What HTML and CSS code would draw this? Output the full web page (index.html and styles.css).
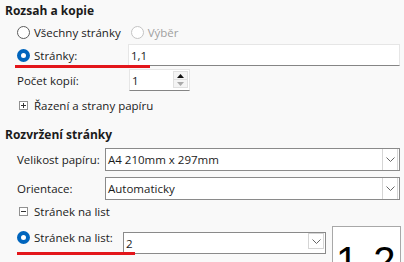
FILE: index.html
```html
<!DOCTYPE html>
<html>
<head>
    <title>Tisk</title>
    <link rel="stylesheet" href="styles.css">
</head>
<body>
    <div id="panel">
        <div class="section-title">Rozsah a kopie</div>
        <div class="row row-choice">
            <label class="opt"><span class="radio"></span>Všechny stránky</label>
            <label class="opt disabled"><span class="radio"></span>Výběr</label>
        </div>
        <div class="row row-pages">
            <label class="opt label-col"><span class="radio checked"></span>Stránky:</label>
            <div class="textbox wide">1,1</div>
            <span class="mark mark-pages"></span>
        </div>
        <div class="row row-copies">
            <span class="label-col">Počet kopií:</span>
            <div class="textbox spin">
                <span class="spin-value">1</span>
                <span class="spin-buttons">
                    <span class="spin-btn up"><svg width="7" height="4" viewBox="0 0 7 4"><path d="M0 4 L3.5 0 L7 4 Z" fill="#111"/></svg></span>
                    <span class="spin-btn down"><svg width="7" height="4" viewBox="0 0 7 4"><path d="M0 0 L3.5 4 L7 0 Z" fill="#aaa"/></svg></span>
                </span>
            </div>
        </div>
        <div class="row row-expander">
            <svg class="expander" width="9" height="9" viewBox="0 0 9 9"><rect x="0.5" y="0.5" width="8" height="8" fill="#fff" stroke="#919191"/><path d="M2 4.5 H7 M4.5 2 V7" stroke="#333"/></svg>
            <span>Řazení a strany papíru</span>
        </div>

        <div class="section-title second">Rozvržení stránky</div>
        <div class="row row-combo">
            <span class="label-col2">Velikost papíru:</span>
            <div class="combo wide">
                <span class="combo-value">A4 210mm x 297mm</span>
                <span class="combo-btn"><svg width="9" height="5" viewBox="0 0 9 5"><path d="M0.5 0.5 L4.5 4.5 L8.5 0.5" fill="none" stroke="#666"/></svg></span>
            </div>
        </div>
        <div class="row row-combo second-combo">
            <span class="label-col2">Orientace:</span>
            <div class="combo wide">
                <span class="combo-value">Automaticky</span>
                <span class="combo-btn"><svg width="9" height="5" viewBox="0 0 9 5"><path d="M0.5 0.5 L4.5 4.5 L8.5 0.5" fill="none" stroke="#666"/></svg></span>
            </div>
        </div>
        <div class="row row-expander2">
            <svg class="expander" width="9" height="9" viewBox="0 0 9 9"><rect x="0.5" y="0.5" width="8" height="8" fill="#fff" stroke="#919191"/><path d="M2 4.5 H7" stroke="#333"/></svg>
            <span>Stránek na list</span>
        </div>
        <div class="row row-sheets">
            <label class="opt label-col3"><span class="radio checked"></span>Stránek na list:</label>
            <div class="combo small">
                <span class="combo-value">2</span>
                <span class="combo-btn"><svg width="9" height="5" viewBox="0 0 9 5"><path d="M0.5 0.5 L4.5 4.5 L8.5 0.5" fill="none" stroke="#666"/></svg></span>
            </div>
            <div class="preview">1 2</div>
            <span class="mark mark-sheets"></span>
        </div>
    </div>
</body>
</html>
```

FILE: styles.css
```css
html, body {
    margin: 0;
    height: 100%;
    overflow: hidden;
}
body {
    background: #f9f9f9;
    font-family: "Open Sans", "Noto Sans", sans-serif;
    font-size: 11.5px;
    color: #1b1b1b;
}
#panel {
    display: flex;
    flex-direction: column;
}
.section-title {
    height: 22px;
    line-height: 22px;
    padding-left: 5px;
    font-size: 12px;
    font-weight: 700;
}
.section-title.second {
    margin-top: 7px;
}
.row {
    position: relative;
    display: flex;
    align-items: center;
    padding-left: 17px;
}
.row-choice { height: 21px; }
.row-pages { height: 24px; }
.row-copies { height: 26px; }
.row-expander { height: 24px; padding-left: 19px; }
.row-combo { height: 23px; margin-top: 2px; }
.row-combo.second-combo { margin-top: 6px; }
.row-expander2 { height: 23px; padding-left: 19px; }
.row-sheets { height: 40px; align-items: flex-start; margin-top: 3px; }

.opt {
    display: flex;
    align-items: center;
}
.opt.disabled {
    color: #a0a0a0;
    margin-left: 10px;
}
.radio {
    box-sizing: border-box;
    width: 13px;
    height: 13px;
    margin-right: 4px;
    border: 1px solid #5c5c5c;
    border-radius: 50%;
    background: #fff;
}
.disabled .radio {
    border-color: #c4c4c4;
}
.radio.checked {
    border: 4px solid #0065bd;
}
.label-col { width: 111px; flex: none; }
.label-col2 { width: 88px; flex: none; }
.label-col3 { width: 106px; flex: none; }
.row-sheets .label-col3 { margin-top: 4px; }

.textbox {
    box-sizing: border-box;
    height: 22px;
    background: #fff;
    border: 1px solid #e6e6e6;
    border-bottom-color: #858585;
    display: flex;
    align-items: center;
    padding-left: 2px;
}
.textbox.wide { width: 272px; }
.textbox.spin {
    width: 61px;
    margin-left: 1px;
    justify-content: space-between;
    padding-right: 1px;
}
.spin-buttons {
    display: flex;
    flex-direction: column;
    width: 15px;
    align-self: flex-start;
    margin-top: 1px;
}
.spin-btn {
    display: flex;
    align-items: center;
    justify-content: center;
    height: 9px;
    background: #f4f4f4;
    border: 1px solid #e0e0e0;
    box-sizing: border-box;
}
.spin-btn.down {
    border-top: none;
    height: 8px;
}
.expander {
    margin-right: 6px;
}

.combo {
    box-sizing: border-box;
    height: 23px;
    background: #fff;
    border: 1px solid #8a8a8a;
    display: flex;
    align-items: center;
    justify-content: space-between;
    padding-left: 2px;
    padding-right: 1px;
}
.combo.wide { width: 295px; }
.combo.small {
    width: 203px;
    height: 22px;
    margin-top: 6px;
}
.combo-btn {
    box-sizing: border-box;
    width: 16px;
    height: 100%;
    display: flex;
    align-items: center;
    justify-content: center;
    border-left: 1px solid #d5d5d5;
    border-right: 1px solid #d5d5d5;
}
.combo.small .combo-btn {
    height: 16px;
    align-self: flex-start;
    border: 1px solid #d5d5d5;
}

.preview {
    box-sizing: border-box;
    width: 69px;
    height: 60px;
    margin-left: 6px;
    background: #fff;
    border: 1px solid #a8a8a8;
    font-family: "Liberation Sans", Arial, sans-serif;
    font-size: 40px;
    line-height: 40px;
    word-spacing: 4px;
    padding-top: 14px;
    padding-left: 3px;
    color: #000;
    white-space: nowrap;
    overflow: hidden;
}

.mark {
    position: absolute;
    height: 3px;
    background: #e3161b;
}
.mark-pages {
    left: 15px;
    width: 135px;
    top: 22px;
}
.mark-sheets {
    left: 17px;
    width: 118px;
    top: 26px;
}
```
